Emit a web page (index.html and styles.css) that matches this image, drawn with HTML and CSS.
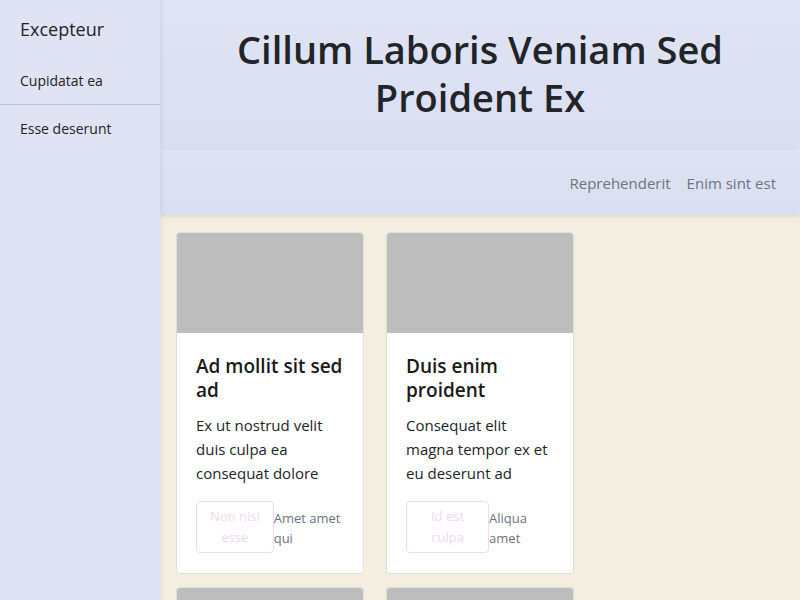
FILE: index.html
```html
<!DOCTYPE html>
<html>
<head>
<meta charset="utf-8">
<link rel="stylesheet" href="styles.css">
</head>
<body>
<div class="app">
  <aside class="sidebar">
    <div class="brand">Excepteur</div>
    <a class="side-link active">Cupidatat ea</a>
    <a class="side-link">Esse deserunt</a>
  </aside>
  <main class="main">
    <header class="hero">
      <h1 class="title">Cillum Laboris Veniam Sed Proident Ex</h1>
    </header>
    <nav class="topnav">
      <a class="nav-link">Reprehenderit</a>
      <a class="nav-link">Enim sint est</a>
    </nav>
    <section class="content">
      <div class="grid">
        <div class="card">
          <div class="card-img"></div>
          <div class="card-body">
            <h2 class="card-title">Ad mollit sit sed ad</h2>
            <p class="card-text">Ex ut nostrud velit duis culpa ea consequat dolore</p>
            <div class="card-actions">
              <button class="btn">Non nisi esse</button>
              <span class="meta">Amet amet qui</span>
            </div>
          </div>
        </div>
        <div class="card">
          <div class="card-img"></div>
          <div class="card-body">
            <h2 class="card-title">Duis enim proident</h2>
            <p class="card-text">Consequat elit magna tempor ex et eu deserunt ad</p>
            <div class="card-actions">
              <button class="btn">Id est culpa</button>
              <span class="meta">Aliqua amet</span>
            </div>
          </div>
        </div>
        <div class="card">
          <div class="card-img"></div>
        </div>
        <div class="card">
          <div class="card-img"></div>
        </div>
      </div>
    </section>
  </main>
</div>
</body>
</html>
```
FILE: styles.css
```css
* { box-sizing: border-box; }
html, body { margin: 0; height: 100%; }
body {
  font-family: "Open Sans", "Noto Sans", sans-serif;
  background: #f3eedf;
  color: #212529;
  overflow: hidden;
}
.app { display: flex; height: 600px; overflow: hidden; }
.sidebar {
  width: 160px;
  flex: none;
  background: #dfe3f3;
  box-shadow: 2px 0 4px rgba(0,0,0,0.06);
  display: flex;
  flex-direction: column;
  position: relative;
  z-index: 2;
}
.brand {
  font-size: 18px;
  line-height: 27px;
  padding: 16px 20px 14px;
  color: #212529;
}
.side-link {
  font-size: 14px;
  line-height: 21px;
  padding: 13px 20px;
  color: #212529;
}
.side-link.active { border-bottom: 1px solid #c0c5d6; }
.main { flex: 1; display: flex; flex-direction: column; min-width: 0; overflow: hidden; }
.hero {
  flex: none;
  background: linear-gradient(#e0e4f4, #d9def1);
  border-radius: 0 0 4px 4px;
  padding: 25px 20px 29px;
  box-shadow: 0 1px 3px rgba(0,0,0,0.05);
}
.title {
  margin: 0;
  text-align: center;
  font-size: 38px;
  line-height: 48px;
  font-weight: 600;
  color: #212529;
}
.topnav {
  flex: none;
  background: linear-gradient(#dfe3f3, #d9def1);
  border-radius: 4px;
  height: 65px;
  display: flex;
  justify-content: flex-end;
  align-items: center;
  gap: 16px;
  padding: 0 24px;
  box-shadow: 0 2px 4px rgba(0,0,0,0.08);
  position: relative;
  z-index: 1;
}
.nav-link { font-size: 15px; color: #6c757d; }
.content { padding: 17px 16px; flex: none; }
.grid {
  display: grid;
  grid-template-columns: repeat(2, 188px);
  column-gap: 22px;
  row-gap: 13px;
}
.card {
  background: #fff;
  border: 1px solid #dedede;
  border-radius: 4px;
  overflow: hidden;
}
.card-img { height: 100px; background: #bdbdbd; }
.card-body { padding: 21px 19px 20px; }
.card-title {
  margin: 0 0 11px;
  font-size: 19px;
  line-height: 24px;
  font-weight: 600;
  color: #1a1a1a;
}
.card-text {
  margin: 0 0 16px;
  font-size: 15px;
  line-height: 24px;
  color: #212529;
}
.card-actions { display: flex; align-items: flex-start; }
.btn {
  font-family: inherit;
  font-size: 13px;
  line-height: 21px;
  padding: 4px 12px;
  background: #fff;
  color: #f0d6f2;
  border: 1px solid #f0dcf2;
  border-radius: 4px;
}
.meta {
  font-size: 13px;
  line-height: 20px;
  color: #6c757d;
  padding-top: 7px;
  flex-shrink: 0.6;
}
```
